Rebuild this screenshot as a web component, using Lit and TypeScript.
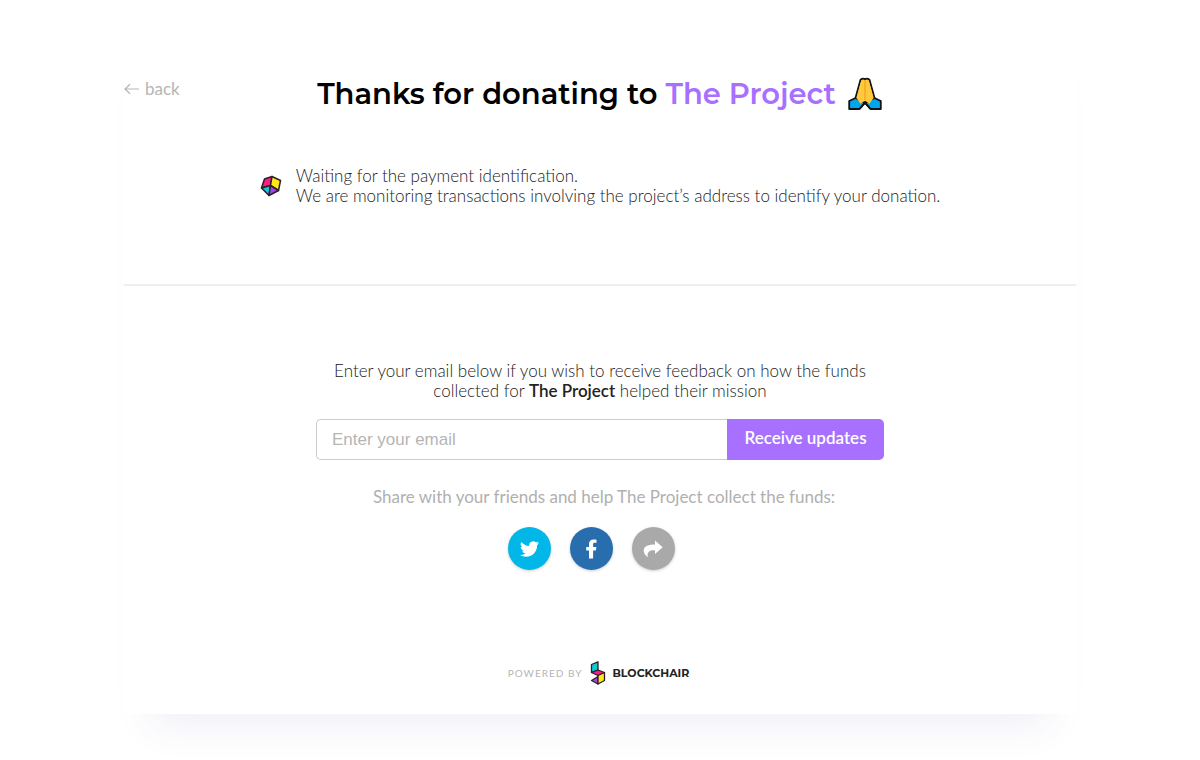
import { LitElement, html, css } from "lit";
import { customElement, state } from "lit/decorators.js";

@customElement("app-root")
class AppRoot extends LitElement {
  static styles = css`
    :host {
      display: block;
      background: #fff;
      color: #222;
      font: 300 17px/20px Lato, "Open Sans", sans-serif;
    }
    .card {
      box-sizing: border-box;
      width: calc(100% - 48px);
      max-width: 952px;
      margin: 0 auto 46px;
      padding-bottom: 29px;
      background: #fff;
      box-shadow: 0 38px 38px -28px rgba(75, 65, 150, 0.09);
    }
    .top {
      display: grid;
      grid-template-columns: 1fr auto 1fr;
      padding-top: 74px;
    }
    .back {
      display: flex;
      align-items: center;
      gap: 6px;
      height: 29px;
      justify-self: start;
      color: #b5b5b5;
      font-weight: 400;
      text-decoration: none;
    }
    h1 {
      display: flex;
      align-items: center;
      gap: 11px;
      margin: 0;
      color: #000;
      font: 600 29px/39px Montserrat, Inter, sans-serif;
    }
    .accent {
      color: #a770ff;
    }
    .status {
      display: flex;
      justify-content: center;
      align-items: center;
      gap: 14px;
      padding: 53px 0 78px;
    }
    .status p {
      margin: 0;
    }
    hr {
      margin: 0;
      border: 0;
      border-top: 2px solid #eee;
    }
    .signup {
      display: flex;
      flex-direction: column;
      max-width: 568px;
      margin: 0 auto;
      padding-top: 75px;
      text-align: center;
    }
    .lead {
      padding: 0 16px;
    }
    .lead b {
      font-weight: 600;
    }
    .field {
      display: flex;
      height: 41px;
      margin-top: 18px;
    }
    input {
      box-sizing: border-box;
      flex: 1;
      min-width: 0;
      padding: 0 15px;
      border: 1px solid #ccc;
      border-right: 0;
      border-radius: 5px 0 0 5px;
      color: #333;
      background: #fff;
      font: 400 17px "Liberation Sans", sans-serif;
    }
    input::placeholder {
      color: #b5b5b5;
      opacity: 1;
    }
    .send {
      width: 157px;
      padding: 0 0 4px;
      border: 0;
      border-radius: 0 5px 5px 0;
      background: #a770ff;
      color: #fff;
      font: 600 17px/20px Lato, sans-serif;
    }
    .share {
      margin: 27px 0 0 8px;
      color: #b0b0b0;
      font-weight: 400;
    }
    .social {
      display: flex;
      justify-content: center;
      gap: 19px;
      margin: 20px 18px 0 0;
    }
    .round {
      width: 43px;
      height: 43px;
      padding: 0;
      border: 0;
      border-radius: 50%;
      display: grid;
      place-items: center;
      box-shadow: 0 1px 3px rgba(0, 0, 0, 0.2);
    }
    .twitter {
      background: #00b7e8;
    }
    .facebook {
      background: #286eae;
    }
    .forward {
      background: #a9a9a9;
    }
    footer {
      display: flex;
      justify-content: center;
      align-items: center;
      margin-top: 91px;
      padding-right: 3px;
      color: #b5b5b5;
      font: 400 10px/24px Lato, sans-serif;
      letter-spacing: 1px;
    }
    .brand {
      display: flex;
      align-items: center;
      gap: 6px;
      margin-left: 8px;
      color: #222;
      font: 700 11px/24px Montserrat, Inter, sans-serif;
      letter-spacing: 0;
      text-decoration: none;
    }
    svg {
      display: block;
      flex: none;
    }
  `;

  @state() private email = "";

  render() {
    return html`
      <main class="card">
        <header class="top">
          <a class="back" href="#">
            <svg width="15" height="12" viewBox="0 0 15 12" fill="none" stroke="#b5b5b5" stroke-width="1.2">
              <path d="M15 6H1M6 1.2L1 6l5 4.8" />
            </svg>
            back
          </a>
          <h1>
            <span>Thanks for donating to <span class="accent">The Project</span></span>
            <svg width="36" height="36" viewBox="0 0 36 36" role="img" aria-label="Folded hands" stroke="#111" stroke-width="1.8" stroke-linejoin="round">
              <path d="M13.500 3.700Q15.800 2.100 18 3.100q2.200-1 4.500.6L27.500 22 23 31 18 26 13 31 8.500 22z" fill="#ffc83d" />
              <path d="M8.500 22L2.200 25V33H12.500L18 27z" fill="#00a6ed" />
              <path d="M27.500 22L33.800 25V33H23.500L18 27z" fill="#00a6ed" />
              <path d="M14.200 4.500h7.600L26.600 22 22.500 27.800 18 24.500 13.500 27.800 9.400 22z" fill="#ffc83d" stroke="none" />
              <path d="M18 4v20" stroke="#f0a623" stroke-width="1.300" />
              <path d="M12.500 33L18 26.500l5.500 6.500" fill="none" />
            </svg>
          </h1>
        </header>

        <section class="status" role="status">
          <svg width="22" height="22" viewBox="0 0 22 22" stroke="#2b2026" stroke-width="1.500" stroke-linejoin="round">
            <path d="M4.500 4L12 1.500 10.500 10.500 1.500 13z" fill="#ff1989" />
            <path d="M12 1.500L20.500 5.500 18.500 15.500 10.500 10.500z" fill="#ffe817" />
            <path d="M10.500 10.500L9 20.500 1.500 13z" fill="#10c9d5" />
            <path d="M10.500 10.500L18.500 15.500 9 20.500z" fill="#a344e5" />
          </svg>
          <p>
            Waiting for the payment identification.<br />
            We are monitoring transactions involving the project’s address to identify your donation.
          </p>
        </section>

        <hr />

        <section class="signup">
          <label class="lead" for="email">
            Enter your email below if you wish to receive feedback on how the funds collected for
            <b>The Project</b> helped their mission
          </label>
          <form class="field" @submit=${(e: Event) => e.preventDefault()}>
            <input
              id="email"
              type="email"
              placeholder="Enter your email"
              .value=${this.email}
              @input=${(e: Event) => (this.email = (e.target as HTMLInputElement).value)}
            />
            <button class="send" type="submit">Receive updates</button>
          </form>
          <p class="share">Share with your friends and help The Project collect the funds:</p>
          <div class="social">
            <button class="round twitter" aria-label="Share on Twitter">
              <svg width="19" height="20" viewBox="0 0 24 24" fill="#fff">
                <path d="M23.950 4.570a10 10 0 0 1-2.820.770 4.960 4.960 0 0 0 2.160-2.720c-.950.550-2 .950-3.130 1.180a4.920 4.920 0 0 0-8.380 4.480C7.690 8.100 4.070 6.130 1.640 3.160a4.920 4.920 0 0 0 1.520 6.570 4.900 4.900 0 0 1-2.230-.610v.060a4.920 4.920 0 0 0 3.950 4.830 5 5 0 0 1-2.210.080 4.940 4.940 0 0 0 4.600 3.420A9.870 9.870 0 0 1 0 19.540a13.990 13.990 0 0 0 7.550 2.210c9.050 0 14-7.500 14-13.980 0-.210 0-.420-.020-.630a9.940 9.940 0 0 0 2.460-2.550z" />
              </svg>
            </button>
            <button class="round facebook" aria-label="Share on Facebook">
              <svg width="11" height="20" viewBox="0 0 11 20" fill="#fff">
                <path d="M3 19.500V11.500H.2V8H3V5C3 2 4.700.5 7.500.5c1.300 0 3 .2 3 .2v3H8.800C7.400 3.700 7.100 4.400 7.100 5.200V8h3.300l-.5 3.500H7.100v8z" />
              </svg>
            </button>
            <button class="round forward" aria-label="Share">
              <svg width="20" height="18" viewBox="0 0 20 18" fill="#fff">
                <path d="M12 .6L19.700 7.300 12 14V10.200C7 10 3.800 11.400 4.700 17.300 1.800 15.200.5 12.400.7 10 1.100 6 6 4.500 12 4.400z" />
              </svg>
            </button>
          </div>
        </section>

        <footer>
          <span>POWERED BY</span>
          <a class="brand" href="#">
            <svg width="16" height="24" viewBox="0 0 16 24" stroke="#2b2026" stroke-width="1.300" stroke-linejoin="round">
              <path d="M1.500 3.500L8 .8V9L1.500 11.500z" fill="#10c9d5" />
              <path d="M1.500 11.500L8 9 14.500 11.500 8 14.500z" fill="#ff1989" />
              <path d="M1.500 19.500L8 15.500V23z" fill="#a344e5" />
              <path d="M8 14.500l6.500-3v8L8 23z" fill="#ffe817" />
            </svg>
            BLOCKCHAIR
          </a>
        </footer>
      </main>
    `;
  }
}
